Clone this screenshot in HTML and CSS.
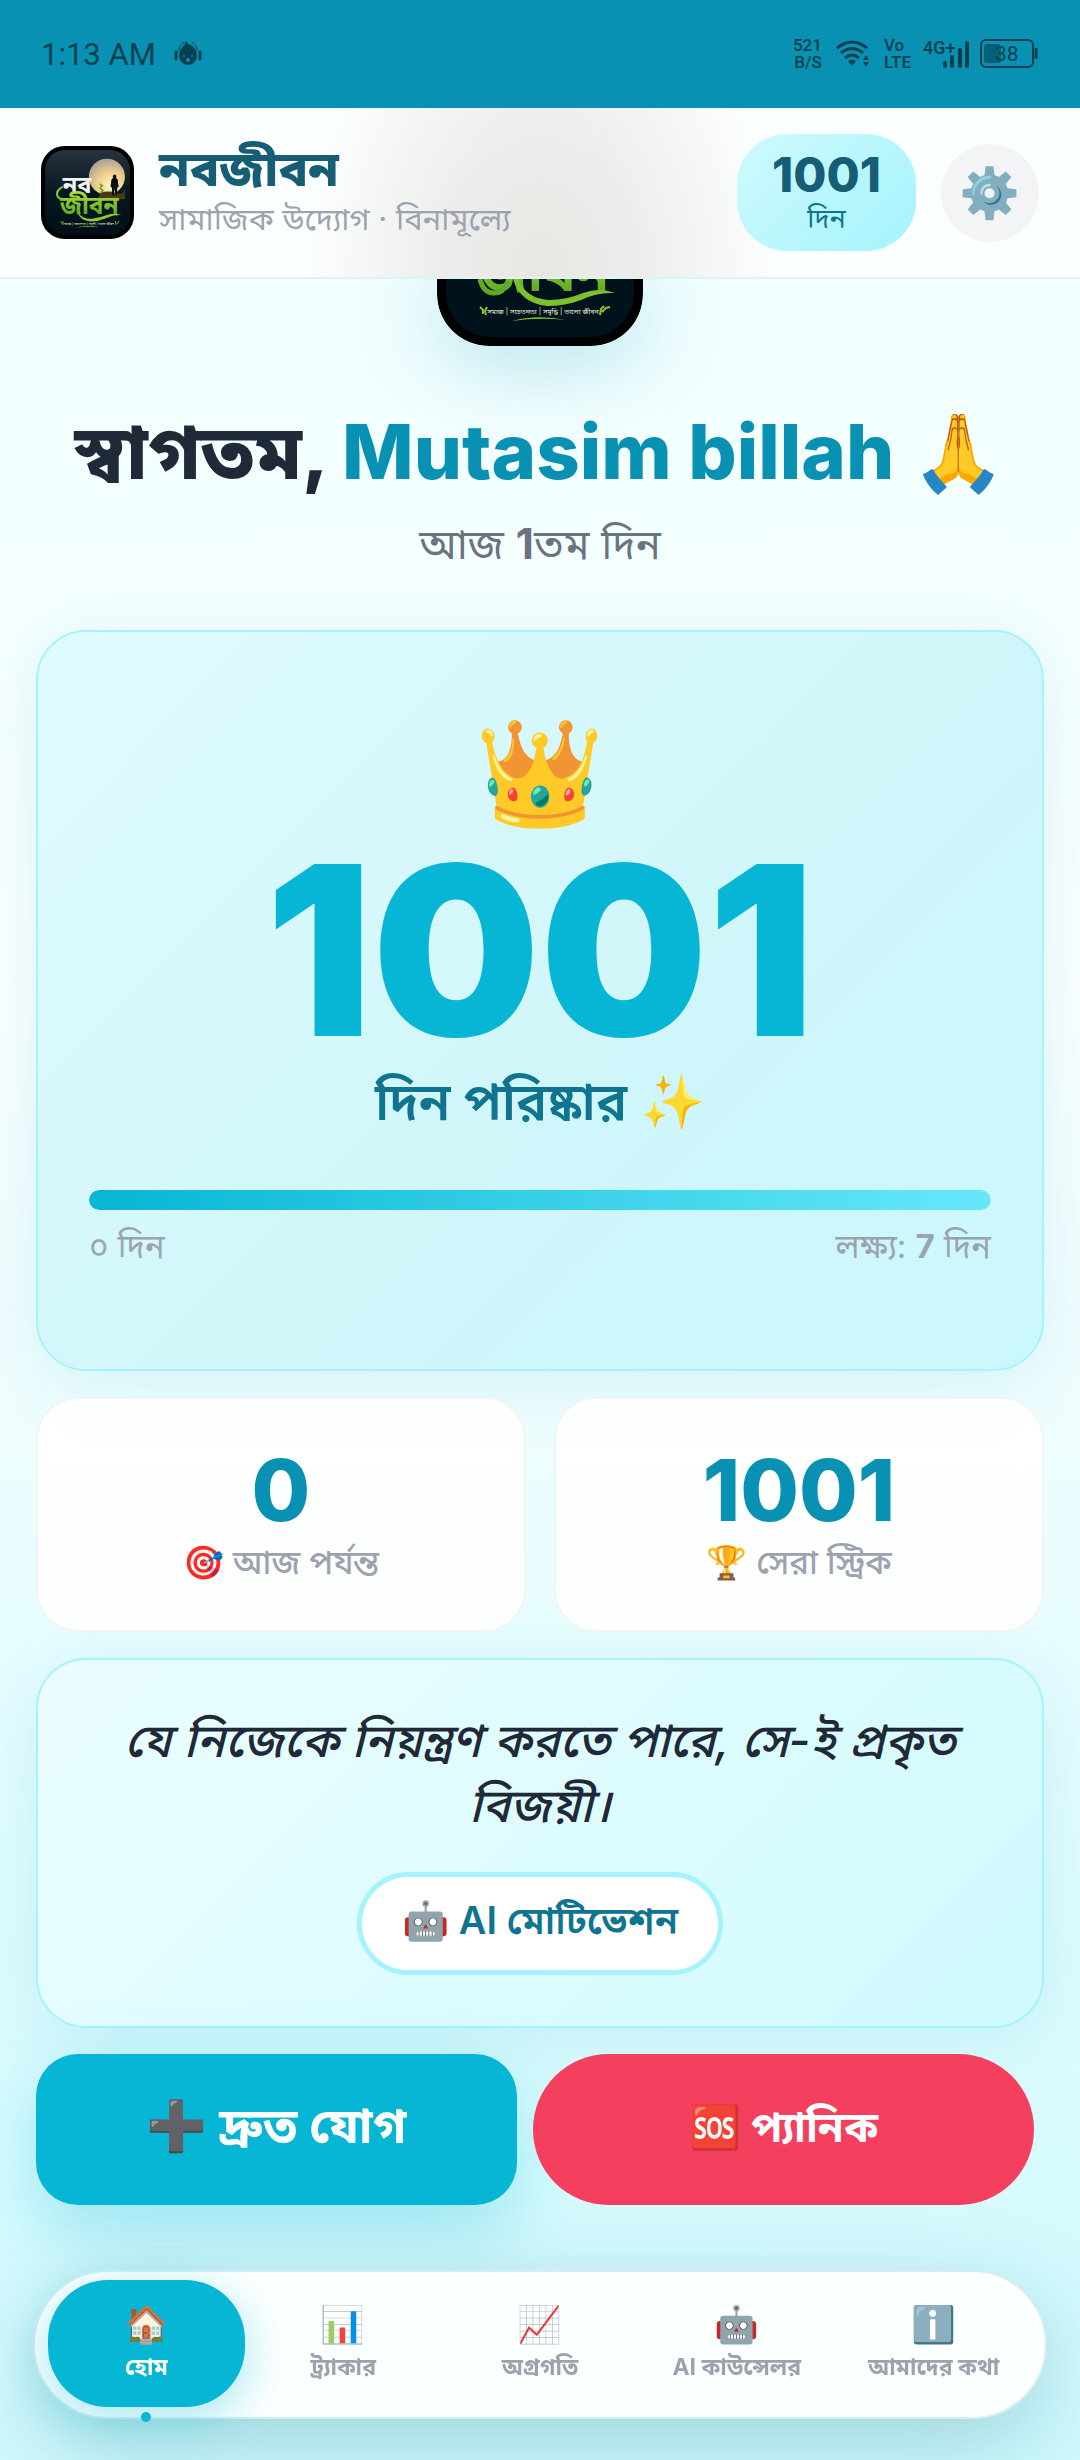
FILE: index.html
```html
<!DOCTYPE html>
<html lang="bn">
<head>
    <meta charset="UTF-8">
    <meta name="viewport" content="width=device-width, initial-scale=1.0">
    <title>নবজীবন</title>
    <link rel="stylesheet" href="styles.css">
</head>
<body>
    <div class="status-bar">
        <div class="status-left">
            <span>1:13 AM</span>
            <svg width="28" height="26" viewBox="0 0 28 26">
                <path d="M12 0q1 3 5 4 6 3 6 11a9 9 0 0 1-18 0q0-8 6-11-1-2 1-4z" fill="currentColor"/>
                <path d="M4 10Q6 3 10 1M24 10Q22 3 18 1" fill="none" stroke="currentColor" stroke-width="1"/>
                <path d="M2 11v7M26 11v7" fill="none" stroke="currentColor" stroke-width="3" stroke-linecap="round"/>
                <circle cx="10" cy="15" r="1" fill="#0891b2"/>
                <circle cx="18" cy="15" r="1" fill="#0891b2"/>
                <circle cx="14" cy="19" r="2" fill="#0891b2"/>
            </svg>
        </div>
        <div class="status-right">
            <span class="tiny">521<br>B/S</span>
            <svg width="34" height="28" viewBox="0 0 34 28">
                <path d="M1 8Q16-4 31 8M5 13q11-9 22 0M9 18q7-6 14 0" fill="none" stroke="currentColor" stroke-width="3"/>
                <path d="M12 21q4-3 8 0l-4 5zM27 20l3-5 3 5zM27 22h6l-3 5z" fill="currentColor"/>
            </svg>
            <span class="tiny volte">Vo<br>LTE</span>
            <svg class="signal" width="48" height="30" viewBox="0 0 48 30">
                <text x="0" y="15" class="signal-text">4G+</text>
                <path d="M22 24v3M29 18v9M37 11v16M44 4v23" stroke="currentColor" stroke-width="4" stroke-linecap="round"/>
            </svg>
            <svg width="60" height="30" viewBox="0 0 60 30">
                <rect x="2" y="1" width="52" height="27" rx="5" fill="none" stroke="currentColor" stroke-width="2"/>
                <rect x="5" y="5" width="17" height="19" rx="3" fill="#055f77"/>
                <path d="M57 9v11" stroke="currentColor" stroke-width="3"/>
                <text x="16" y="22" class="battery-text">38</text>
            </svg>
        </div>
    </div>

    <header class="app-header">
        <svg class="app-logo" viewBox="0 0 206 206" role="img" aria-label="নবজীবন">
            <defs>
                <linearGradient id="night" x1="0" y1="0" x2="0" y2="1">
                    <stop offset="0" stop-color="#26333f"/>
                    <stop offset="0.5" stop-color="#07171f"/>
                    <stop offset="1" stop-color="#000f18"/>
                </linearGradient>
                <radialGradient id="sun" cx="0.6" cy="0.75" r="0.75">
                    <stop offset="0" stop-color="#fff6c8"/>
                    <stop offset="0.5" stop-color="#f0cf8c"/>
                    <stop offset="1" stop-color="#a9a294"/>
                </radialGradient>
                <linearGradient id="leaf" x1="0" y1="0" x2="0" y2="1">
                    <stop offset="0" stop-color="#b4e03c"/>
                    <stop offset="1" stop-color="#4a9d20"/>
                </linearGradient>
            </defs>
            <rect width="206" height="206" rx="52" fill="#000"/>
            <rect x="9" y="9" width="188" height="188" rx="44" fill="url(#night)"/>
            <circle cx="146" cy="68" r="40" fill="url(#sun)"/>
            <path d="M130 104q20-6 36 0t20-10v24h-60z" fill="#4a3a14"/>
            <path d="M160 70a4 4 0 1 1 6 0l4 5 2 16-3 1-1 18h-3l-2-16-2 16h-3l-1-18-3-2 2-15z" fill="#0a0d10"/>
            <path d="M130 84l6 4-5 5 6 6-6 5" fill="none" stroke="#6fae24" stroke-width="4"/>
            <text x="48" y="103" class="logo-top">নব</text>
            <text x="42" y="151" class="logo-bottom">জীবন</text>
            <path d="M48 90Q32 100 36 110q3 7 14 8" fill="none" stroke="#83c22c" stroke-width="5"/>
            <path d="M81 146q10 16 32 15 16-1 33-8 16-6 32 0-18-1-34 7-16 7-34 7-24-2-29-21z" fill="#8ccb2f"/>
            <path d="M43 167l6 7M49 166l-1 8M166 174l-1-8M167 174l6-8" stroke="#83c22c" stroke-width="2"/>
            <text x="106" y="174" class="logo-tag">সমাজ | সচেতনতা | সমৃদ্ধি | ভালো জীবন</text>
            <path d="M75 181q26-7 54-1-28-3-54 1z" fill="#83c22c"/>
        </svg>
        <div class="app-title">
            <h2>নবজীবন</h2>
            <p>সামাজিক উদ্যোগ · বিনামূল্যে</p>
        </div>
        <div class="streak-badge">
            <strong>1001</strong>
            <span>দিন</span>
        </div>
        <button class="settings-btn" aria-label="সেটিংস">⚙️</button>
    </header>

    <main>
        <section class="hero">
            <svg class="hero-logo" viewBox="0 139 206 67" aria-hidden="true">
                <rect width="206" height="206" rx="52" fill="#000"/>
                <rect x="9" y="9" width="188" height="188" rx="44" fill="#00121b"/>
                <text x="42" y="151" class="logo-bottom">জীবন</text>
                <path d="M43 139q3 14 14 14 10 0 14-11" fill="none" stroke="#5fa926" stroke-width="5"/>
                <path d="M81 139q8 20 32 21 16 0 33-7 16-6 32 0-18-1-34 7-16 6-34 6-27-3-34-27z" fill="#7cc02d"/>
                <path d="M43 167l3 3v4M50 167l-2 4 1 4M163 175l1-6 3-3M165 172l4-4 4-1" fill="none" stroke="#83c22c" stroke-width="2"/>
                <text x="106" y="174" class="logo-tag">সমাজ | সচেতনতা | সমৃদ্ধি | ভালো জীবন</text>
                <path d="M75 181q26-7 54-1-28-3-54 1z" fill="#83c22c"/>
            </svg>
            <h1>স্বাগতম, <span>Mutasim billah</span> 🙏</h1>
            <p>আজ <b>1</b>তম দিন</p>
        </section>

        <section class="card counter-card">
            <div class="crown">👑</div>
            <div class="counter">1001</div>
            <div class="counter-label">দিন পরিষ্কার ✨</div>
            <div class="progress"><div class="progress-fill" style="width: 100%"></div></div>
            <div class="progress-labels">
                <span>০ দিন</span>
                <span>লক্ষ্য: <b>7</b> দিন</span>
            </div>
        </section>

        <section class="stats">
            <div class="stat">
                <strong>0</strong>
                <span>🎯 আজ পর্যন্ত</span>
            </div>
            <div class="stat">
                <strong>1001</strong>
                <span>🏆 সেরা স্ট্রিক</span>
            </div>
        </section>

        <section class="card quote-card">
            <p>যে নিজেকে নিয়ন্ত্রণ করতে পারে, সে-ই প্রকৃত বিজয়ী।</p>
            <button class="ai-btn">🤖 AI মোটিভেশন</button>
        </section>

        <section class="actions">
            <button class="add-btn">➕ দ্রুত যোগ</button>
            <button class="panic-btn">🆘 প্যানিক</button>
        </section>
    </main>

    <nav class="bottom-nav">
        <a href="#home" class="active"><span class="icon">🏠</span>হোম</a>
        <a href="#tracker"><span class="icon">📊</span>ট্র্যাকার</a>
        <a href="#progress"><span class="icon">📈</span>অগ্রগতি</a>
        <a href="#counselor"><span class="icon">🤖</span>AI কাউন্সেলর</a>
        <a href="#about"><span class="icon">ℹ️</span>আমাদের কথা</a>
    </nav>
</body>
</html>
```
FILE: styles.css
```css
* {
    box-sizing: border-box;
    margin: 0;
    padding: 0;
}

body {
    font-family: Inter, 'Noto Sans Bengali', 'Noto Sans', 'Noto Color Emoji', sans-serif;
    background: linear-gradient(180deg, #ecfeff 0%, #fbffff 40%, #cffafe 100%);
    min-height: 100vh;
    color: #1f2937;
}

button {
    font-family: inherit;
    border: none;
    cursor: pointer;
}

/* Logo lettering */
.logo-top {
    font-size: 52px;
    font-weight: 700;
    fill: #f4f4f4;
}

.logo-bottom {
    font-size: 54px;
    font-weight: 700;
    fill: url(#leaf);
}

.logo-tag {
    font-size: 7px;
    text-anchor: middle;
    fill: #e4eecb;
}

/* Status bar */
.status-bar {
    display: flex;
    justify-content: space-between;
    align-items: center;
    height: 108px;
    padding: 0 41px;
    background: #0891b2;
    color: #044150;
    font-family: Roboto, sans-serif;
}

.status-left,
.status-right {
    display: flex;
    align-items: center;
}

.status-left {
    gap: 18px;
    font-size: 31px;
}

.status-right {
    gap: 14px;
}

.tiny {
    font-size: 17px;
    line-height: 17px;
    font-weight: 500;
    text-align: right;
}

.volte {
    text-align: left;
}

.signal {
    margin: 0 -6px 0 -2px;
}

.signal-text {
    font-size: 18px;
    font-weight: 500;
    fill: currentColor;
}

.battery-text {
    font-size: 21px;
    fill: currentColor;
}

/* Header */
.app-header {
    position: sticky;
    top: 0;
    z-index: 10;
    display: flex;
    align-items: center;
    padding: 26px 41px;
    background: radial-gradient(ellipse 22% 200% at 50% 100%, #e7e7e2 0%, #ecedeb 40%, #fcffff 100%);
    border-bottom: 2px solid #e0f2f4;
}

.app-logo {
    width: 93px;
    height: 93px;
}

.app-title {
    flex: 1;
    margin-left: 25px;
}

.app-title h2 {
    font-size: 49px;
    line-height: 44px;
    font-weight: 800;
    color: #155e75;
}

.app-title p {
    margin-top: 8px;
    font-size: 31px;
    line-height: 40px;
    color: #9ca3af;
}

.streak-badge {
    display: flex;
    flex-direction: column;
    justify-content: center;
    align-items: center;
    min-width: 179px;
    height: 117px;
    margin-right: 25px;
    border-radius: 50px;
    background: linear-gradient(135deg, #cffafe, #a5f3fc);
}

.streak-badge strong {
    font-size: 48px;
    line-height: 52px;
    font-weight: 800;
    color: #155e75;
}

.streak-badge span {
    font-size: 27px;
    line-height: 36px;
    color: #0e7490;
}

.settings-btn {
    width: 98px;
    height: 98px;
    border-radius: 50%;
    background: #f3f4f6;
    font-size: 49px;
    line-height: 98px;
}

main {
    padding: 0 36px 255px;
}

/* Hero */
.hero {
    text-align: center;
    padding-bottom: 56px;
}

.hero-logo {
    display: block;
    width: 206px;
    height: 67px;
    margin: 0 auto 59px;
    border-radius: 0 0 52px 52px;
    box-shadow: 0 12px 84px rgba(8, 145, 178, 0.3);
}

.hero h1 {
    font-size: 76px;
    line-height: 92px;
    font-weight: 800;
    white-space: nowrap;
}

.hero h1 span {
    color: #0891b2;
}

.hero p {
    margin-top: 17px;
    font-size: 42px;
    line-height: 60px;
    color: #6b7280;
}

/* Cards */
.card {
    border: 2px solid #a5f3fc;
    border-radius: 50px;
    text-align: center;
    box-shadow: 0 12px 72px rgba(8, 145, 178, 0.12);
}

.counter-card {
    padding: 70px 51px 99px;
    background: linear-gradient(135deg, #e0fbfd, #cff6fa 60%, #cbf8fd);
}

.crown {
    font-size: 104px;
    line-height: 138px;
    margin-bottom: 4px;
}

.counter {
    font-size: 236px;
    line-height: 212px;
    font-weight: 900;
    color: #06b6d4;
}

.counter-label {
    margin-top: 6px;
    font-size: 52px;
    line-height: 80px;
    font-weight: 600;
    color: #0e7490;
}

.progress {
    height: 20px;
    margin-top: 48px;
    border-radius: 10px;
    background: #e5e7eb;
    overflow: hidden;
}

.progress-fill {
    height: 100%;
    border-radius: 10px;
    background: linear-gradient(90deg, #06b6d4, #67e8f9);
}

.progress-labels {
    display: flex;
    justify-content: space-between;
    margin-top: 12px;
    font-size: 33px;
    line-height: 48px;
    color: #9ca3af;
}

/* Stats */
.stats {
    display: grid;
    grid-template-columns: 1fr 1fr;
    gap: 28px;
    margin: 26px 0;
}

.stat {
    display: flex;
    flex-direction: column;
    align-items: center;
    padding: 50px 20px 43px;
    border: 2px solid #f3f4f6;
    border-radius: 42px;
    background: rgba(255, 255, 255, 0.9);
}

.stat strong {
    font-size: 85px;
    line-height: 84px;
    font-weight: 800;
    color: #0891b2;
}

.stat span {
    margin-top: 4px;
    font-size: 33px;
    line-height: 50px;
    font-weight: 500;
    color: #9ca3af;
}

/* Quote */
.quote-card {
    padding: 47px 60px 51px;
    background: linear-gradient(135deg, #ecfeff, #cffafe);
}

.quote-card p {
    font-size: 47px;
    line-height: 65px;
    font-style: italic;
    font-weight: 500;
}

.ai-btn {
    height: 103px;
    margin-top: 35px;
    padding: 0 40px;
    border: 5px solid #a5f3fc;
    border-radius: 52px;
    background: #fff;
    font-size: 38px;
    font-weight: 600;
    color: #0e7490;
}

/* Actions */
.actions {
    display: grid;
    grid-template-columns: 481fr 501fr;
    gap: 16px;
    margin-top: 26px;
    padding-right: 10px;
}

.actions button {
    height: 151px;
    color: #fff;
    font-weight: 700;
}

.add-btn {
    border-radius: 42px;
    background: #06b6d4;
    font-size: 49px;
    box-shadow: 0 24px 72px rgba(6, 182, 212, 0.3);
}

.panic-btn {
    border-radius: 76px;
    background: #f43f5e;
    font-size: 42px;
}

/* Bottom navigation */
.bottom-nav {
    position: fixed;
    left: 33px;
    right: 33px;
    bottom: 41px;
    z-index: 10;
    display: grid;
    grid-template-columns: repeat(5, 1fr);
    padding: 8px 13px 10px;
    border: 2px solid #d3eef2;
    border-radius: 75px;
    background: #fcffff;
    box-shadow: 0 24px 90px rgba(8, 100, 120, 0.25);
}

.bottom-nav a {
    position: relative;
    display: flex;
    flex-direction: column;
    align-items: center;
    height: 127px;
    padding-top: 18px;
    border-radius: 60px;
    font-size: 23px;
    line-height: 34px;
    font-weight: 700;
    color: #9ca3af;
    text-decoration: none;
    white-space: nowrap;
}

.bottom-nav .icon {
    font-size: 36px;
    line-height: 52px;
}

.bottom-nav .active {
    background: #06b6d4;
    color: #fff;
    box-shadow: 0 12px 48px rgba(6, 182, 212, 0.35);
}

.bottom-nav .active::after {
    content: '';
    position: absolute;
    bottom: -15px;
    width: 10px;
    height: 10px;
    border-radius: 50%;
    background: #06b6d4;
}
```
